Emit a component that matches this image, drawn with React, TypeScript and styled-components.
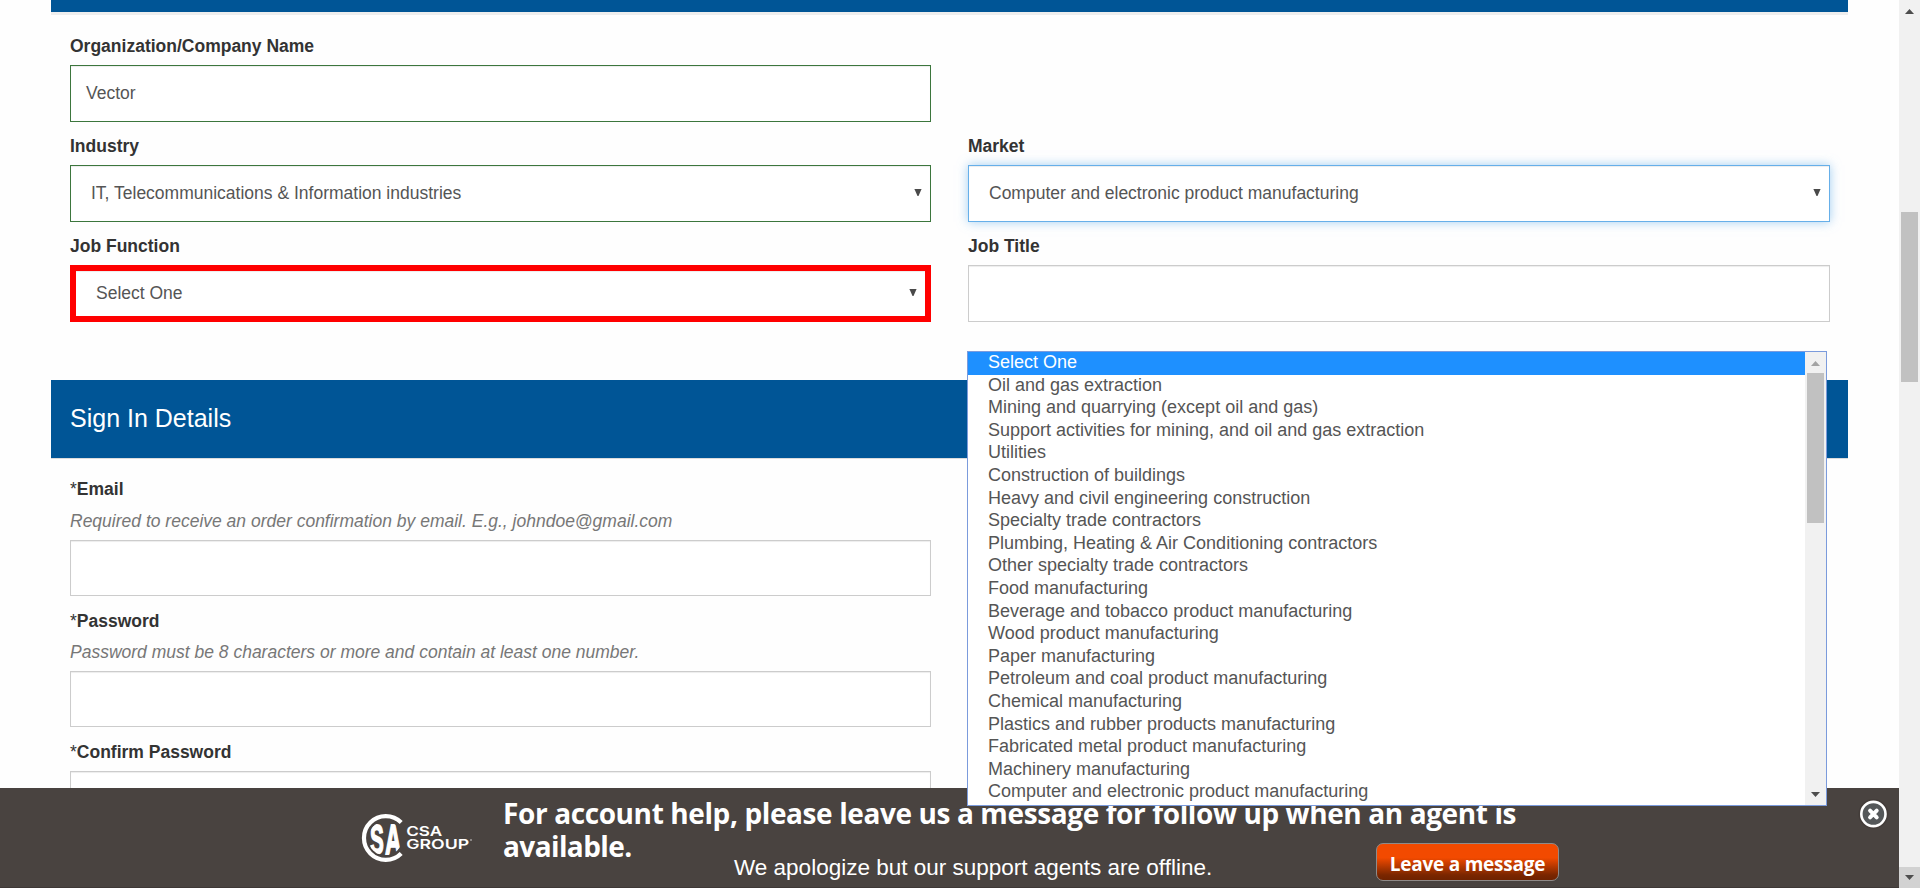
import React from "react";
import styled, { createGlobalStyle, css } from "styled-components";

const Global = createGlobalStyle`
  * { box-sizing: border-box; }
  html, body { margin: 0; padding: 0; background: #fff; }
  body { font-family: "Liberation Sans", Arial, sans-serif; overflow: hidden; }
`;

const Window = styled.div`
  position: relative;
  display: flex;
  width: 1920px;
  height: 888px;
  overflow: hidden;
  background: #fefefe;
`;

const Page = styled.main`
  flex: 1;
  height: 888px;
  overflow: hidden;
  padding: 0 51px;
`;

const TopBar = styled.div`
  height: 15px;
  background: #005596;
  border-bottom: 3px solid #eee;
  width: 1797px;
`;

const SectionBar = styled.h2`
  width: 1797px;
  height: 79px;
  margin: 0;
  padding-left: 19px;
  background: #005596;
  border-bottom: 1px solid #dcdcdc;
  color: #fff;
  font-size: 25px;
  font-weight: 400;
  line-height: 76px;
`;

const FieldGrid = styled.div<{ $top: number; $bottom?: number }>`
  display: grid;
  grid-template-columns: 861px 862px;
  column-gap: 37px;
  padding: ${(p) => p.$top}px 0 ${(p) => p.$bottom ?? 0}px 19px;
`;

const Field = styled.div<{ $first?: boolean; $gap?: number }>`
  grid-column: ${(p) => (p.$first ? "1" : "auto")};
  padding-top: ${(p) => p.$gap ?? 0}px;
`;

const Label = styled.label`
  display: block;
  height: 43px;
  padding-top: 14px;
  color: #333;
  font-size: 17.5px;
  font-weight: 700;
  line-height: 20px;
`;

const Star = styled.span`
  font-weight: 400;
`;

const Hint = styled.div<{ $height: number }>`
  height: ${(p) => p.$height}px;
  padding-top: ${(p) => p.$height - 29}px;
  color: #777;
  font-size: 17.5px;
  font-style: italic;
  line-height: 20px;
`;

type Tone = "valid" | "focus" | "error" | "plain";

const tones = {
  valid: css`border: 1px solid #3c763d;`,
  focus: css`
    border: 1px solid #66afe9;
    box-shadow: inset 0 1px 1px rgba(0, 0, 0, 0.075), 0 0 10px rgba(102, 175, 233, 0.6);
  `,
  error: css`border: 6px solid #f00;`,
  plain: css`border: 1px solid #ccc;`,
};

const Control = styled.div<{ $tone: Tone; $indent?: number; $height?: number }>`
  display: flex;
  align-items: center;
  justify-content: space-between;
  height: ${(p) => p.$height ?? 57}px;
  padding: 0 8px 2px ${(p) => p.$indent ?? 15}px;
  background: #fff;
  box-shadow: inset 0 1px 1px rgba(0, 0, 0, 0.075);
  color: #555;
  font-size: 17.5px;
  line-height: 20px;
  ${(p) => tones[p.$tone]}
`;

const Popup = styled.div`
  position: absolute;
  left: 967px;
  top: 351px;
  z-index: 3;
  display: flex;
  width: 860px;
  height: 455px;
  border: 1px solid #7b9bdc;
  background: #fff;
`;

const Options = styled.ul`
  flex: 1;
  margin: 0;
  padding: 0;
  list-style: none;
  overflow: hidden;
`;

const Option = styled.li<{ $active?: boolean }>`
  height: 22.6px;
  padding-left: 20px;
  background: ${(p) => (p.$active ? "#1e90ff" : "transparent")};
  color: ${(p) => (p.$active ? "#fff" : "#555")};
  font-size: 18px;
  line-height: 20px;
`;

const Track = styled.div<{ $pad: number }>`
  display: flex;
  flex-direction: column;
  align-items: center;
  justify-content: space-between;
  width: 21px;
  padding-top: ${(p) => p.$pad}px;
  background: #f1f1f1;
`;

const Thumb = styled.div<{ $height: number; $offset: number }>`
  width: 17px;
  height: ${(p) => p.$height}px;
  margin-top: ${(p) => p.$offset}px;
  background: #c1c1c1;
`;

const TrackTop = styled.div`
  display: flex;
  flex-direction: column;
  align-items: center;
`;

const TrackEnd = styled.div<{ $shade?: boolean }>`
  display: flex;
  align-items: center;
  justify-content: center;
  width: 21px;
  height: 21px;
  background: ${(p) => (p.$shade ? "#d2d2d2" : "transparent")};
`;

const ChatBar = styled.footer`
  position: absolute;
  left: 0;
  bottom: 0;
  z-index: 2;
  display: flex;
  width: 1899px;
  height: 100px;
  padding-left: 361px;
  background: #494340;
  border-bottom: 1px solid #3e3836;
  color: #fff;
`;

const LogoBox = styled.div`
  width: 142px;
  padding-top: 25px;
`;

const ChatBody = styled.div`
  width: 1056px;
`;

const ChatTitle = styled.div`
  height: 66px;
  padding-top: 9px;
  font-family: "Open Sans", sans-serif;
  font-size: 28px;
  font-weight: 700;
  letter-spacing: -0.39px;
  line-height: 33px;
  white-space: nowrap;
`;

const TitleEnd = styled.span`
  letter-spacing: -0.6px;
`;

const ChatRow = styled.div`
  display: flex;
  justify-content: space-between;
  padding-left: 231px;
`;

const ChatNote = styled.div`
  padding-top: 1px;
  font-size: 22.5px;
  line-height: 26px;
  white-space: nowrap;
`;

const ChatButton = styled.button`
  width: 183px;
  height: 38px;
  margin: -11px 0 0;
  padding: 4px 0 0;
  border: 1px solid #8f8a88;
  border-radius: 7px;
  background: linear-gradient(#f24a00 0%, #f24a00 38%, #7a2600 86%, #6e2200 100%);
  color: #fff;
  font-family: "Open Sans", sans-serif;
  font-size: 19px;
  font-weight: 700;
  letter-spacing: -0.25px;
  line-height: 24px;
  white-space: nowrap;
`;

const CloseBox = styled.div`
  margin: 10px 0 0 298px;
`;

const Caret = () => (
  <svg width="8" height="7" viewBox="0 0 8 7">
    <path d="M0.4 0H7.6L4.5 7H3.5Z" fill="#4a4a4a" />
  </svg>
);

const Arrow = ({ up, color = "#4d4d4d" }: { up?: boolean; color?: string }) => (
  <svg width="9" height="5" viewBox="0 0 9 5" display="block">
    <path d={up ? "M0 5L4.5 0L9 5Z" : "M0 0L4.5 5L9 0Z"} fill={color} />
  </svg>
);

const Logo = () => (
  <svg width="112" height="50" viewBox="0 0 112 50" fill="#fff">
    <clipPath id="disc">
      <circle cx="24.2" cy="25.4" r="17" />
    </clipPath>
    <path d="M40.2 9.6A21.8 21.8 0 1 0 40.2 40.4" fill="none" stroke="#fff" strokeWidth="4.2" />
    <g fontFamily="Liberation Sans, Arial, sans-serif" fontWeight="700" clipPath="url(#disc)">
      <text transform="translate(8.9 40.8) scale(0.49 1)" fontSize="42" stroke="#fff" strokeWidth="1.8">S</text>
      <text transform="translate(24.2 40.8) scale(0.52 1)" fontSize="42" stroke="#fff" strokeWidth="2">A</text>
    </g>
    <g fontFamily="Inter, sans-serif" fontWeight="600">
      <text x="45.2" y="23" fontSize="13.5" textLength="36" lengthAdjust="spacingAndGlyphs">CSA</text>
      <text x="45.2" y="36" fontSize="13.5" textLength="63" lengthAdjust="spacingAndGlyphs">GROUP</text>
    </g>
    <circle cx="110" cy="27" r="0.7" />
  </svg>
);

const CloseIcon = () => (
  <svg width="32" height="32" viewBox="0 0 32 32" display="block">
    <circle cx="16.4" cy="16" r="15" fill="#3f3936" opacity="0.6" />
    <circle cx="16.4" cy="16" r="12.1" fill="#55585a" stroke="#fff" strokeWidth="2.6" />
    <path d="M13.1 12.7L19.7 19.3M19.7 12.7L13.1 19.3" stroke="#fff" strokeWidth="4" strokeLinecap="round" />
  </svg>
);

const options = [
  "Select One",
  "Oil and gas extraction",
  "Mining and quarrying (except oil and gas)",
  "Support activities for mining, and oil and gas extraction",
  "Utilities",
  "Construction of buildings",
  "Heavy and civil engineering construction",
  "Specialty trade contractors",
  "Plumbing, Heating & Air Conditioning contractors",
  "Other specialty trade contractors",
  "Food manufacturing",
  "Beverage and tobacco product manufacturing",
  "Wood product manufacturing",
  "Paper manufacturing",
  "Petroleum and coal product manufacturing",
  "Chemical manufacturing",
  "Plastics and rubber products manufacturing",
  "Fabricated metal product manufacturing",
  "Machinery manufacturing",
  "Computer and electronic product manufacturing",
];

export default function App() {
  return (
    <Window>
      <Global />
      <Page>
        <TopBar />
        <FieldGrid $top={7} $bottom={58}>
          <Field>
            <Label>Organization/Company Name</Label>
            <Control $tone="valid">Vector</Control>
          </Field>
          <Field $first>
            <Label>Industry</Label>
            <Control $tone="valid" $indent={20}>
              IT, Telecommunications &amp; Information industries
              <Caret />
            </Control>
          </Field>
          <Field>
            <Label>Market</Label>
            <Control $tone="focus" $indent={20}>
              Computer and electronic product manufacturing
              <Caret />
            </Control>
          </Field>
          <Field>
            <Label>Job Function</Label>
            <Control $tone="error" $indent={20}>
              Select One
              <Caret />
            </Control>
          </Field>
          <Field>
            <Label>Job Title</Label>
            <Control $tone="plain" />
          </Field>
        </FieldGrid>
        <SectionBar>Sign In Details</SectionBar>
        <FieldGrid $top={6}>
          <Field $first>
            <Label><Star>*</Star>Email</Label>
            <Hint $height={32}>Required to receive an order confirmation by email. E.g., johndoe@gmail.com</Hint>
            <Control $tone="plain" $height={56} />
          </Field>
          <Field $first $gap={1}>
            <Label><Star>*</Star>Password</Label>
            <Hint $height={31}>Password must be 8 characters or more and contain at least one number.</Hint>
            <Control $tone="plain" $height={56} />
          </Field>
          <Field $first $gap={1}>
            <Label><Star>*</Star>Confirm Password</Label>
            <Control $tone="plain" $height={56} />
          </Field>
        </FieldGrid>
      </Page>
      <Track $pad={9}>
        <TrackTop>
          <Arrow up />
          <Thumb $height={170} $offset={198} />
        </TrackTop>
        <TrackEnd $shade><Arrow /></TrackEnd>
      </Track>

      <ChatBar>
        <LogoBox><Logo /></LogoBox>
        <ChatBody>
          <ChatTitle>
            For account help, please leave us a message for follow up when an agent is
            <br />
            <TitleEnd>available.</TitleEnd>
          </ChatTitle>
          <ChatRow>
            <ChatNote>We apologize but our support agents are offline.</ChatNote>
            <ChatButton>Leave a message</ChatButton>
          </ChatRow>
        </ChatBody>
        <CloseBox><CloseIcon /></CloseBox>
      </ChatBar>

      <Popup>
        <Options>
          {options.map((o, i) => (
            <Option key={o} $active={i === 0}>{o}</Option>
          ))}
        </Options>
        <Track $pad={9}>
          <TrackTop>
            <Arrow up color="#a3a3a3" />
            <Thumb $height={150} $offset={7} />
          </TrackTop>
          <TrackEnd><Arrow /></TrackEnd>
        </Track>
      </Popup>
    </Window>
  );
}
